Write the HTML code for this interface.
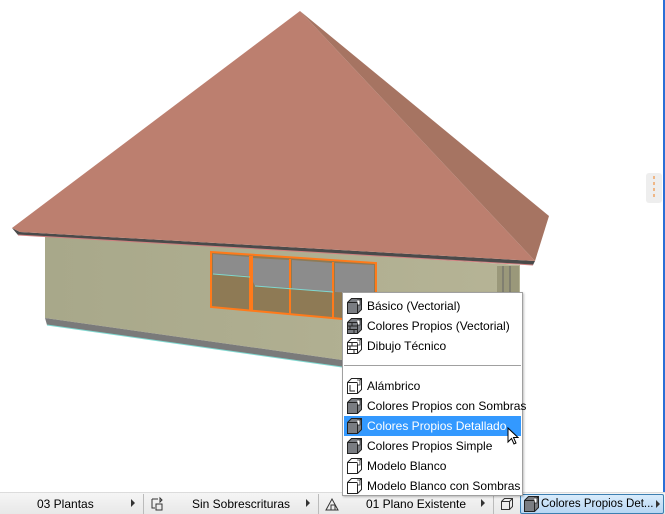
<!DOCTYPE html>
<html><head><meta charset="utf-8"><style>
*{margin:0;padding:0;box-sizing:border-box}
body{width:665px;height:514px;overflow:hidden;background:#fff;position:relative;font-family:"Liberation Sans",sans-serif;font-size:12px;color:#000}
#menu{position:absolute;z-index:5;left:342px;top:292px;width:181px;height:204px;background:#fff;border:1px solid #a0a0a0;box-shadow:1px 1px 2px rgba(0,0,0,.25)}
.it{position:absolute;left:1px;width:177px;height:20px;line-height:20px;padding-left:23px;white-space:nowrap}
.it svg{position:absolute;left:2px;top:1px}
.hl{background:#3399ff;color:#fff}
.sep{position:absolute;left:1px;width:177px;top:72px;height:1px;background:#a0a0a0}
#bar{position:absolute;left:0;top:492px;width:665px;height:22px;background:linear-gradient(#f5f5f5,#e8e8e8);border-top:1px solid #dcdcdc}
.t{position:absolute;top:4px;white-space:nowrap}
.ar{position:absolute;top:6px;width:0;height:0;border-left:4px solid #333;border-top:4px solid transparent;border-bottom:4px solid transparent}
.dv{position:absolute;top:1px;width:1px;height:20px;background:#bbb}
#btn{position:absolute;left:520px;top:1px;width:144px;height:20px;background:linear-gradient(#d9ecfc,#b7d6f3);border:1px solid #3c7fb1;border-radius:2px;font-size:11.5px}
</style></head><body>
<svg width="0" height="0" style="position:absolute">
<defs>
<g id="ic"><path d="M1.5 5.5 L5.5 1.5 H15.5 V12.5 L11.5 16.5 H1.5 Z" fill="#7a7d82" stroke="#222"/><path d="M1.5 5.5 H11.5 V16.5 M11.5 5.5 L15.5 1.5" fill="none" stroke="#222"/><path d="M11 3 H14 V8 H12" fill="#fff" stroke="#222" stroke-width=".8"/></g>
<g id="icw"><path d="M1.5 5.5 L5.5 1.5 H15.5 V12.5 L11.5 16.5 H1.5 Z" fill="#fff" stroke="#222"/><path d="M1.5 5.5 H11.5 V16.5 M11.5 5.5 L15.5 1.5" fill="none" stroke="#222"/><path d="M11 3 H14 V8 H12" fill="#fff" stroke="#222" stroke-width=".8"/></g>
</defs></svg>
<svg width="665" height="514" style="position:absolute;left:0;top:0">
<defs>
<linearGradient id="wall" x1="0" x2="1"><stop offset="0" stop-color="#a8a88a"/><stop offset="1" stop-color="#b6b496"/></linearGradient>
</defs>
<polygon points="45,235 520,265 520,292 342,292 342,360 45,318" fill="url(#wall)"/>
<polygon points="45,318 342,360 342,367 47,325" fill="#7a7a7a"/>
<line x1="47" y1="325" x2="342" y2="367" stroke="#7fd8d0" stroke-width="1"/>
<rect x="497" y="266" width="22" height="26" fill="#9a987a"/>
<line x1="503" y1="266" x2="503" y2="292" stroke="#666"/><line x1="510" y1="266" x2="510" y2="292" stroke="#666"/>
<polygon points="211,252 376,263 376,322 211,307" fill="#8e7a55"/>
<polygon points="213,254 250,257 250,276 213,274" fill="#8c8c8c"/>
<polygon points="252,258 290,260 290,288 255,286 252,280" fill="#8c8c8c"/>
<polygon points="292,260 333,263 333,292 292,289" fill="#8c8c8c"/>
<polygon points="335,263 374,265 374,294 335,292" fill="#8c8c8c"/>
<g stroke="#ff7a1a" stroke-width="2" fill="none">
<polygon points="211,252 376,263 376,322 211,307"/>
<line x1="250" y1="256" x2="250" y2="311"/><line x1="252" y1="256" x2="252" y2="311"/>
<line x1="290" y1="259" x2="290" y2="315"/><line x1="333" y1="262" x2="333" y2="319"/>
</g>
<line x1="213" y1="274" x2="250" y2="277" stroke="#7fd8d0"/>
<line x1="255" y1="286" x2="333" y2="292" stroke="#7fd8d0"/>
<polygon points="12,228 18,235 533,265 535,261 20,232" fill="#4a4a4a"/>
<polygon points="300,11 12,228 20,232 535,261" fill="#bc7f6f"/>
<polygon points="300,11 549,216 535,261" fill="#a67462"/>
<line x1="18" y1="235" x2="533" y2="265" stroke="#d08080"/>
<rect x="663" y="0" width="2" height="492" fill="#2b6fd6"/>
<rect x="646" y="173" width="16" height="30" rx="3" fill="#eee"/>
<line x1="654" y1="176" x2="654" y2="200" stroke="#f08020" stroke-dasharray="3,3"/>
</svg>
<div id="menu">
<div class="it" style="top:3px"><svg width="18" height="18"><use href="#ic"/></svg>Básico (Vectorial)</div>
<div class="it" style="top:23px"><svg width="18" height="18"><use href="#ic"/><path d="M2 9H11M2 12.5H11M6 6V9M4 9V12.5M8 12.5V16" stroke="#222"/></svg>Colores Propios (Vectorial)</div>
<div class="it" style="top:43px"><svg width="18" height="18"><use href="#icw"/><path d="M2 9H11M2 12.5H11M6 6V9M4 9V12.5M8 12.5V16" stroke="#222"/></svg>Dibujo Técnico</div>
<div class="sep"></div>
<div class="it" style="top:83px"><svg width="18" height="18"><use href="#icw"/><path d="M4 8V14H9" stroke="#222" fill="none"/></svg>Alámbrico</div>
<div class="it" style="top:103px"><svg width="18" height="18"><use href="#ic"/></svg>Colores Propios con Sombras</div>
<div class="it hl" style="top:123px"><svg width="18" height="18"><use href="#ic"/></svg>Colores Propios Detallado</div>
<div class="it" style="top:143px"><svg width="18" height="18"><use href="#ic"/></svg>Colores Propios Simple</div>
<div class="it" style="top:163px"><svg width="18" height="18"><use href="#icw"/></svg>Modelo Blanco</div>
<div class="it" style="top:183px"><svg width="18" height="18"><use href="#icw"/></svg>Modelo Blanco con Sombras</div>
</div>
<svg width="14" height="20" style="position:absolute;z-index:6;left:507px;top:427px"><path d="M1 1V15L4.5 11.5L7 17L9 16L6.5 10.5H11Z" fill="#fff" stroke="#000"/></svg>
<div id="bar">
<span class="t" style="left:37px">03 Plantas</span><div class="ar" style="left:131px"></div><div class="dv" style="left:143px"></div>
<svg width="16" height="16" style="position:absolute;left:150px;top:3px"><path d="M2 3H8M2 3V12H5M10 2V6L12 4ZM6 8H12V14H6Z" stroke="#333" fill="none"/></svg>
<span class="t" style="left:192px">Sin Sobrescrituras</span><div class="ar" style="left:306px"></div><div class="dv" style="left:318px"></div>
<svg width="16" height="16" style="position:absolute;left:324px;top:3px"><path d="M2 14L8 3L14 14ZM7 14V9H11V14" stroke="#333" fill="none"/></svg>
<span class="t" style="left:366px">01 Plano Existente</span><div class="ar" style="left:481px"></div><div class="dv" style="left:493px"></div>
<svg width="14" height="14" style="position:absolute;left:500px;top:4px"><path d="M1.5 4.5L4.5 1.5H12.5V9.5L9.5 12.5H1.5ZM1.5 4.5H9.5V12.5M9.5 4.5L12.5 1.5" stroke="#333" fill="none"/></svg>
<div id="btn"><svg width="18" height="18" style="position:absolute;left:2px;top:0px"><use href="#ic"/></svg><span class="t" style="left:20px;top:3px">Colores Propios Det...</span><div class="ar" style="left:135px;top:5px"></div></div>
</div>
</body></html>
